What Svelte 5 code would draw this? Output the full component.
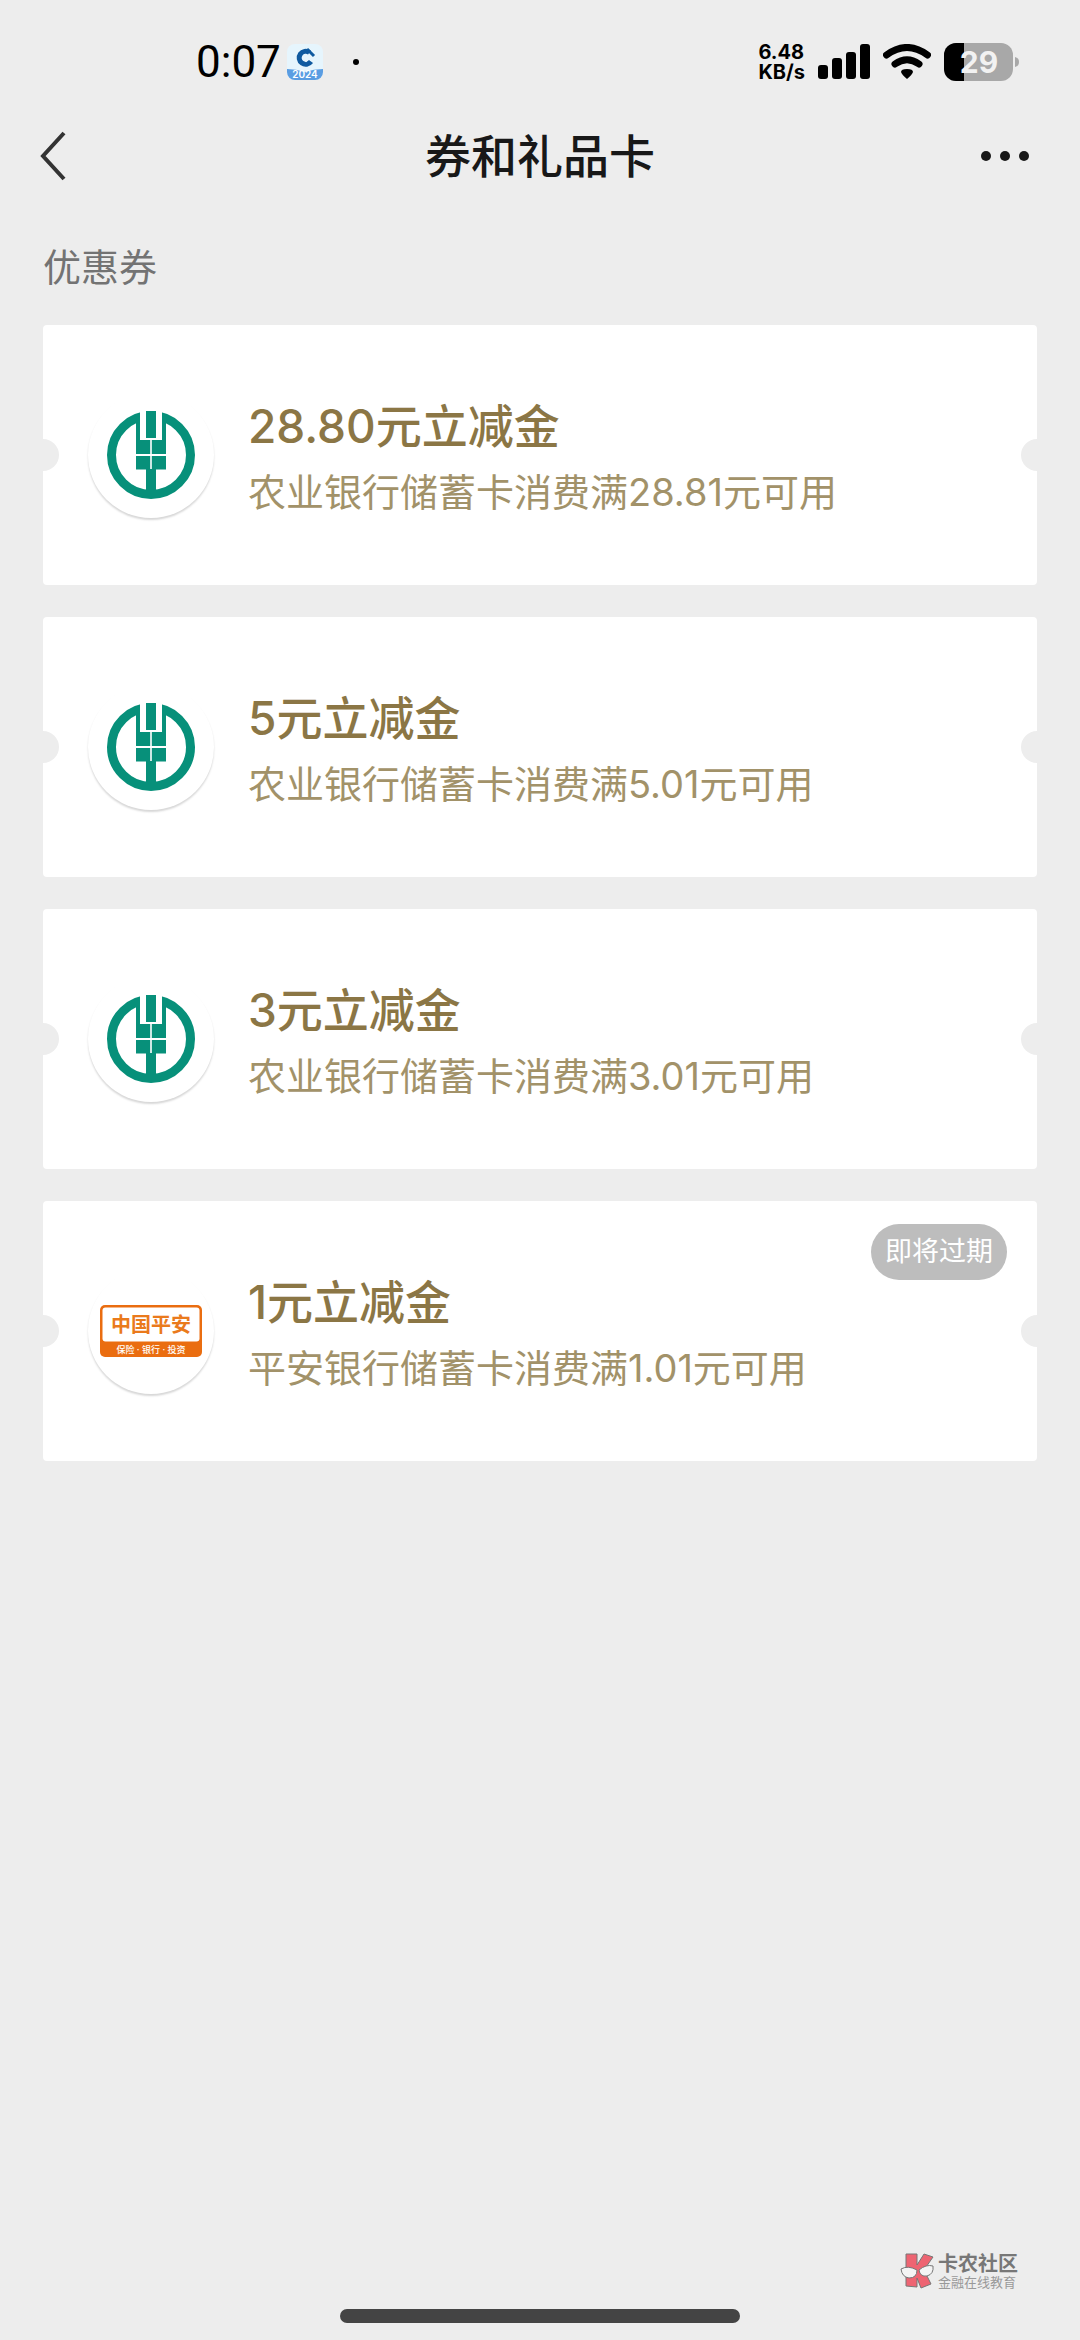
<script>
    let coupons = [
        { id: 1, bank: "abc", title: "28.80元立减金", desc: "农业银行储蓄卡消费满28.81元可用" },
        { id: 2, bank: "abc", title: "5元立减金", desc: "农业银行储蓄卡消费满5.01元可用" },
        { id: 3, bank: "abc", title: "3元立减金", desc: "农业银行储蓄卡消费满3.01元可用" },
        { id: 4, bank: "pingan", title: "1元立减金", desc: "平安银行储蓄卡消费满1.01元可用", tag: "即将过期" }
    ];
</script>

<div class="page">
    <div class="status">
        <div class="status-left">
            <span class="time">0:07</span>
            <svg class="app-icon" viewBox="0 0 36 36" width="36" height="36">
                <defs>
                    <clipPath id="appClip"><rect width="36" height="36" rx="8" /></clipPath>
                </defs>
                <g clip-path="url(#appClip)">
                    <rect width="36" height="36" fill="#e6f5fd" />
                    <path d="M0 25 Q9 25 18 28 Q27 25 36 25 V36 H0Z" fill="#5a9de2" />
                    <path d="M22.500 8.500 A6.500 6.500 0 1 0 24 17.500" fill="none" stroke="#0f5aa0" stroke-width="5" />
                    <path d="M20 5 L27 12" stroke="#0f5aa0" stroke-width="3" />
                    <rect x="16" y="11" width="6" height="6" fill="#e6f5fd" transform="rotate(45 19 14)" />
                    <text x="18" y="34" text-anchor="middle" class="app-year">2024</text>
                </g>
            </svg>
            <span class="dot"></span>
        </div>
        <div class="status-right">
            <div class="speed">6.48<br />KB/s</div>
            <svg width="52" height="36" viewBox="0 0 52 36">
                <rect x="0" y="21" width="10" height="14" rx="3" />
                <rect x="14" y="14" width="10" height="21" rx="3" />
                <rect x="28" y="8" width="10" height="27" rx="3" />
                <rect x="42" y="0" width="10" height="35" rx="3" />
            </svg>
            <svg width="48" height="36" viewBox="0 0 48 36">
                <path d="M3.500 11 Q24 -4 44.500 11" fill="none" stroke="#000" stroke-width="7" stroke-linecap="round" />
                <path d="M12 20 Q24 11.500 36 20" fill="none" stroke="#000" stroke-width="7" stroke-linecap="round" />
                <path d="M18 28 Q18 25 24 25 Q30 25 30 28 Q29 31 24 35 Q19 31 18 28Z" />
            </svg>
            <svg width="75" height="38" viewBox="0 0 75 38">
                <defs>
                    <clipPath id="batClip"><rect width="69" height="38" rx="12" /></clipPath>
                </defs>
                <g clip-path="url(#batClip)">
                    <rect width="69" height="38" fill="#a8a8a8" />
                    <rect width="20" height="38" fill="#000" />
                </g>
                <path d="M71 14 Q75 15 75 19 Q75 23 71 24Z" fill="#a8a8a8" />
                <text x="35" y="30" text-anchor="middle" class="bat-text">29</text>
            </svg>
        </div>
    </div>

    <header class="nav">
        <button class="nav-btn" aria-label="返回">
            <svg width="27" height="50" viewBox="0 0 27 50">
                <path d="M25 2 L4 25 L25 48" fill="none" stroke="#333" stroke-width="4" />
            </svg>
        </button>
        <h1>券和礼品卡</h1>
        <button class="nav-btn right" aria-label="更多">
            <svg width="50" height="12" viewBox="0 0 50 12" fill="#181818">
                <circle cx="6" cy="6" r="5" />
                <circle cx="25" cy="6" r="5" />
                <circle cx="44" cy="6" r="5" />
            </svg>
        </button>
    </header>

    <main>
        <h2>优惠券</h2>
        <ul>
            {#each coupons as coupon (coupon.id)}
                <li>
                    <a class="coupon" href="#coupon-{coupon.id}">
                        <span class="logo">
                            {#if coupon.bank == "abc"}
                                <svg width="88" height="88" viewBox="0 0 88 88">
                                    <circle cx="44" cy="44" r="39.500" fill="none" stroke="#07907a" stroke-width="9" />
                                    <rect x="33" y="0" width="22" height="16" fill="#fff" />
                                    <g fill="#07907a">
                                        <rect x="39" y="0" width="10" height="27" />
                                        <path d="M29 6 H33 V29 H43.200 V43 H29Z" />
                                        <path d="M59 6 H55 V29 H44.800 V43 H59Z" />
                                        <path d="M29 45 H43.200 V58.500 H29Z" />
                                        <path d="M59 45 H44.800 V58.500 H59Z" />
                                        <rect x="39" y="58" width="10" height="24" />
                                    </g>
                                </svg>
                            {:else}
                                <svg width="102" height="52" viewBox="0 0 102 52">
                                    <rect width="102" height="52" rx="5" fill="#ea6d10" />
                                    <rect x="2.500" y="2.500" width="97" height="34" rx="3" fill="#fff" />
                                    <text x="51" y="27" text-anchor="middle" class="pa-name">中国平安</text>
                                    <text x="51" y="48" text-anchor="middle" class="pa-sub">保险 · 银行 · 投资</text>
                                </svg>
                            {/if}
                        </span>
                        <span class="info">
                            <span class="title">{coupon.title}</span>
                            <span class="desc">{coupon.desc}</span>
                        </span>
                        {#if coupon.tag}
                            <span class="tag">{coupon.tag}</span>
                        {/if}
                    </a>
                </li>
            {/each}
        </ul>
    </main>

    <footer>
        <div class="mark">
            <svg width="35" height="36" viewBox="0 0 35 36">
                <path d="M6 1 H17 V12 L24 1 L33 4 L24 17 L31 31 L21 35 L17 25 V34 L6 33Z" fill="#ee6472" stroke="#777" stroke-width="1" />
                <path d="M1 16 Q8 12 17 17 Q17 25 9 25 Q2 24 1 16Z" fill="#f4f4f4" stroke="#777" stroke-width="1" />
                <path d="M19 17 Q26 11 33 13 Q34 21 27 23 Q20 24 19 17Z" fill="#f4f4f4" stroke="#777" stroke-width="1" />
            </svg>
            <div class="mark-text">
                <span class="mark-name">卡农社区</span>
                <span class="mark-sub">金融在线教育</span>
            </div>
        </div>
        <div class="home-bar"></div>
    </footer>
</div>

<style>
    :global(body) {
        background: #ededed;
    }

    .page {
        min-height: 100vh;
        display: flex;
        flex-direction: column;
        background: #ededed;
        color: #181818;
        font-family: Inter, "Noto Sans CJK SC", sans-serif;
    }

    .status {
        height: 112px;
        padding: 12px 61px 0 196px;
        box-sizing: border-box;
        display: flex;
        align-items: center;
        justify-content: space-between;
        color: #000;
    }

    .status-left, .status-right {
        display: flex;
        align-items: center;
        height: 38px;
    }

    .status-left {
        gap: 6px;
    }

    .status-right {
        gap: 13px;
    }

    .time {
        font-family: Roboto, sans-serif;
        font-size: 44px;
        line-height: 44px;
    }

    .app-year {
        font-size: 10px;
        font-weight: 600;
        fill: #fff;
    }

    .dot {
        width: 6px;
        height: 6px;
        margin-left: 24px;
        border-radius: 50%;
        background: #000;
    }

    .speed {
        font-size: 20px;
        line-height: 20px;
        font-weight: 700;
    }

    .bat-text {
        font-size: 30px;
        font-weight: 700;
        fill: #f2f2f2;
    }

    .nav {
        height: 88px;
        padding: 0 39px;
        display: grid;
        grid-template-columns: 1fr auto 1fr;
        align-items: center;
    }

    .nav-btn {
        display: flex;
        justify-self: start;
        padding: 0;
        border: none;
        background: none;
    }

    .nav-btn.right {
        justify-self: end;
        margin-right: 11px;
    }

    h1 {
        margin: 0;
        font-size: 46px;
        line-height: 60px;
        font-weight: 500;
    }

    main {
        padding: 39px 43px 0;
    }

    h2 {
        margin: 0 0 30px;
        font-size: 38px;
        line-height: 56px;
        font-weight: 400;
        color: #737373;
    }

    ul {
        margin: 0;
        padding: 0;
        list-style: none;
        display: flex;
        flex-direction: column;
        gap: 32px;
    }

    .coupon {
        position: relative;
        display: flex;
        align-items: center;
        gap: 34px;
        min-height: 260px;
        padding: 0 45px;
        box-sizing: border-box;
        overflow: hidden;
        border-radius: 4px;
        background: #fff;
        text-decoration: none;
    }

    /* ticket notches */
    .coupon::before, .coupon::after {
        content: "";
        position: absolute;
        top: calc(50% - 16px);
        width: 32px;
        height: 32px;
        border-radius: 50%;
        background: #ededed;
    }

    .coupon::before {
        left: -16px;
    }

    .coupon::after {
        right: -16px;
    }

    .logo {
        display: flex;
        align-items: center;
        justify-content: center;
        flex: none;
        width: 126px;
        height: 126px;
        border-radius: 50%;
        box-shadow: 0 2px 2px rgba(0, 0, 0, 0.16);
    }

    .pa-name {
        font-size: 20px;
        font-weight: 700;
        fill: #ea7a1c;
    }

    .pa-sub {
        font-size: 9px;
        font-weight: 500;
        fill: #fff;
    }

    .info {
        display: flex;
        flex-direction: column;
        gap: 6px;
        padding-top: 3px;
    }

    .title {
        font-size: 46px;
        line-height: 64px;
        font-weight: 500;
        color: #8b7645;
    }

    .desc {
        font-size: 38px;
        line-height: 56px;
        color: #a29269;
    }

    .tag {
        position: absolute;
        top: 23px;
        right: 30px;
        padding: 0 14px;
        border-radius: 28px;
        background: #bdbdbd;
        color: #fff;
        font-size: 27px;
        line-height: 56px;
    }

    footer {
        margin-top: auto;
        padding: 40px 0 17px;
        display: flex;
        flex-direction: column;
        gap: 20px;
    }

    .mark {
        align-self: flex-end;
        display: flex;
        align-items: center;
        gap: 3px;
        margin-right: 62px;
    }

    .mark-text {
        display: flex;
        flex-direction: column;
    }

    .mark-name {
        font-size: 20px;
        line-height: 22px;
        font-weight: 700;
        color: #777;
    }

    .mark-sub {
        font-size: 13px;
        line-height: 14px;
        color: #999;
    }

    .home-bar {
        align-self: center;
        width: 37%;
        height: 14px;
        border-radius: 7px;
        background: #444;
    }
</style>
